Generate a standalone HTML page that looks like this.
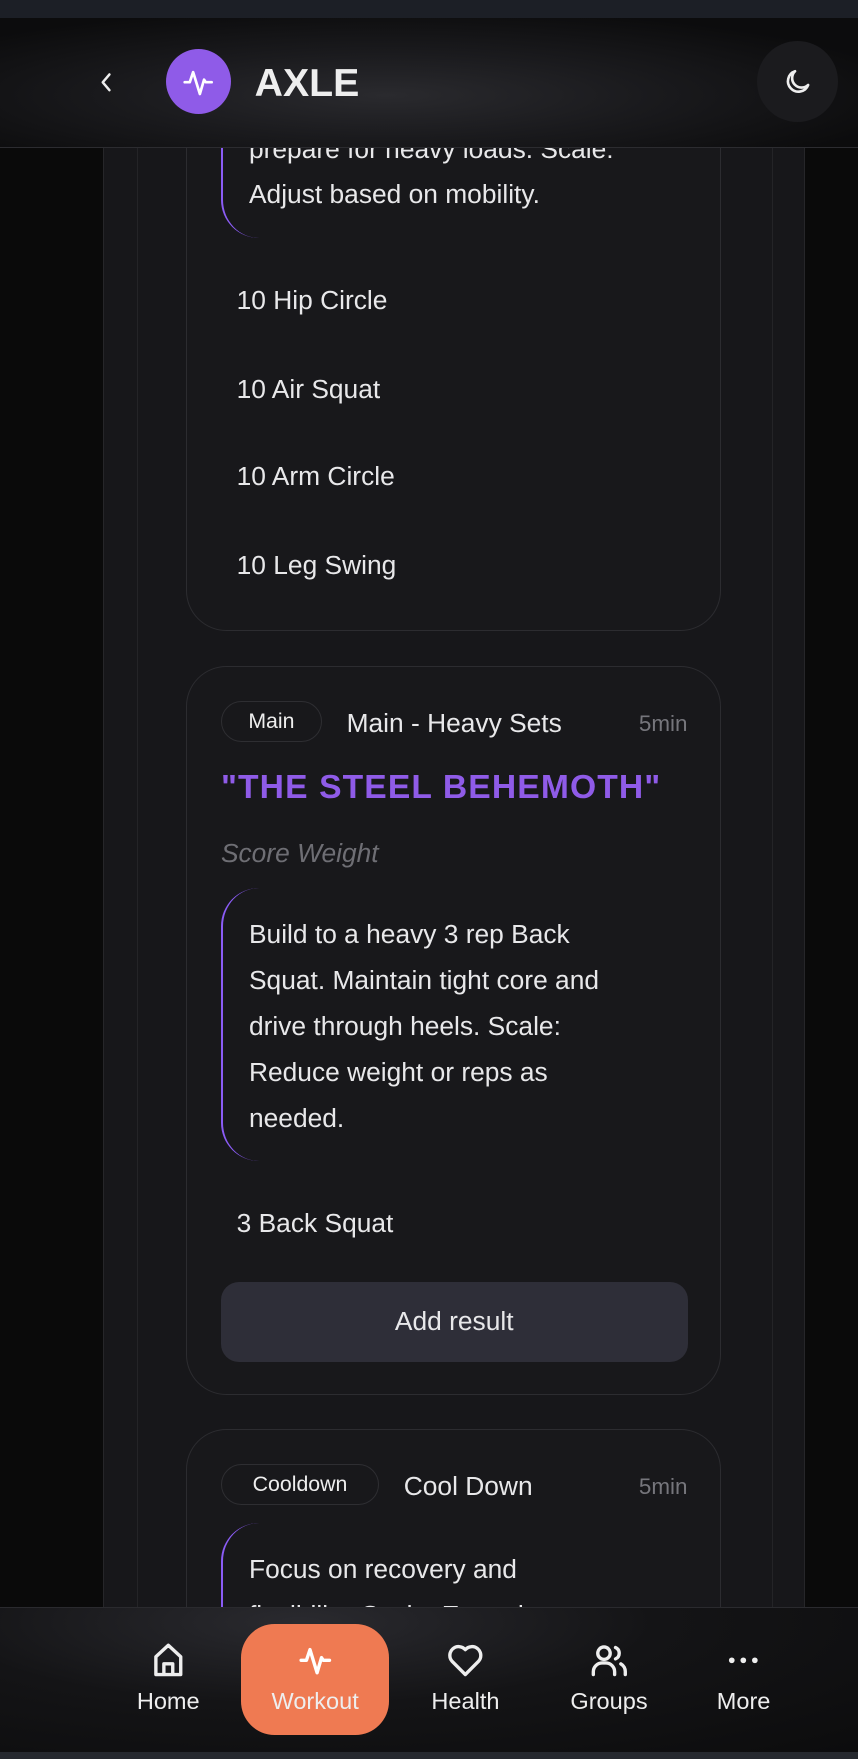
<!DOCTYPE html>
<html><head><meta charset="utf-8"><style>
html{zoom:1.12157;height:1568px;overflow:hidden;background:#0a0a0a}
*{box-sizing:border-box;margin:0;padding:0}
body{width:765px;height:1568px;overflow:hidden;background:#0a0a0a;font-family:"Liberation Sans",sans-serif;color:#e8e8ea;position:relative}
.abs{position:absolute}
.col{left:92px;width:626px;top:0;height:1568px;background:#17171a;border-left:1px solid #262629;border-right:1px solid #262629}
.vl{top:0;height:1568px;width:1px;background:#242427}
.card{left:166px;width:477px;border:1px solid #2c2c30;border-radius:36px;background:#18181b}
.t22{font-size:23.5px;line-height:1}
.quote{border-left:2px solid #8b5cf6;border-radius:34px 0 0 34px}
.tag{border:1px solid #2e2e32;border-radius:19px;height:37px;font-size:19px;display:flex;align-items:center;justify-content:center;color:#eee}
.min{font-size:20px;color:#76767c;width:60px;text-align:right}
.nav{top:1433px;left:0;width:765px;height:129px;background:radial-gradient(ellipse at 35% 10%,#2a2a2f 0%,#141416 45%,#0c0c0d 100%);border-top:1px solid #2a2a2e}
.ni{top:0;width:110px;text-align:center;font-size:21px;color:#eee}
.ni svg{display:block;margin:28px auto 0}
.ni span{display:block;margin-top:6px}
</style></head><body>
<div class="abs col"></div>
<div class="abs vl" style="left:122px"></div>
<div class="abs vl" style="left:688px"></div>

<!-- card 1 -->
<div class="abs card" style="top:60px;height:503px"></div>
<div class="abs quote" style="left:197px;top:40px;width:200px;height:172px"></div>
<div class="abs t22" style="left:222px;top:121px">prepare for heavy loads. Scale:</div>
<div class="abs t22" style="left:222px;top:161px">Adjust based on mobility.</div>
<div class="abs t22" style="left:211px;top:256px">10 Hip Circle</div>
<div class="abs t22" style="left:211px;top:335px">10 Air Squat</div>
<div class="abs t22" style="left:211px;top:413px">10 Arm Circle</div>
<div class="abs t22" style="left:211px;top:492px">10 Leg Swing</div>

<!-- card 2 -->
<div class="abs card" style="top:594px;height:650px"></div>
<div class="abs tag" style="left:197px;top:625px;width:90px">Main</div>
<div class="abs t22" style="left:309px;top:633px">Main - Heavy Sets</div>
<div class="abs min" style="left:553px;top:634px">5min</div>
<div class="abs" style="left:197px;top:686px;font-size:30px;font-weight:bold;color:#8f5be8;letter-spacing:1px">"THE STEEL BEHEMOTH"</div>
<div class="abs t22" style="left:197px;top:749px;font-style:italic;color:#6e6e74">Score Weight</div>
<div class="abs quote" style="left:197px;top:792px;width:200px;height:243px"></div>
<div class="abs t22" style="left:222px;line-height:41px;width:400px;top:813px">Build to a heavy 3 rep Back<br>Squat. Maintain tight core and<br>drive through heels. Scale:<br>Reduce weight or reps as<br>needed.</div>
<div class="abs t22" style="left:211px;top:1079px">3 Back Squat</div>
<div class="abs" style="left:197px;top:1143px;width:416px;height:71px;background:#2e2e38;border-radius:16px;font-size:23.5px;display:flex;align-items:center;justify-content:center">Add result</div>

<!-- card 3 -->
<div class="abs card" style="top:1274px;height:290px"></div>
<div class="abs tag" style="left:197px;top:1305px;width:141px">Cooldown</div>
<div class="abs t22" style="left:360px;top:1313px">Cool Down</div>
<div class="abs min" style="left:553px;top:1314px">5min</div>
<div class="abs quote" style="left:197px;top:1358px;width:200px;height:200px"></div>
<div class="abs t22" style="left:222px;top:1379px;line-height:41px">Focus on recovery and<br>flexibility. Scale: Extend</div>

<!-- header -->
<div class="abs" style="left:0;top:0;width:765px;height:16px;background:#1c1f26"></div>
<div class="abs" style="left:0;top:16px;width:765px;height:116px;background:radial-gradient(ellipse at 45% 60%,#2a2a2e 0%,#1a1a1d 40%,#0c0c0d 80%);border-bottom:1px solid #2c2c30"></div>
<svg class="abs" style="left:86px;top:62px" width="18" height="22" viewBox="0 0 18 22"><path d="M12 4 L6 11 L12 18" fill="none" stroke="#eee" stroke-width="2.2" stroke-linecap="round" stroke-linejoin="round"/></svg>
<div class="abs" style="left:148px;top:44px;width:58px;height:58px;border-radius:50%;background:#8f5be8"></div>
<svg class="abs" style="left:159px;top:55px" width="36" height="36" viewBox="0 0 24 24"><path d="M4 12h3l2-6 4 13 2.5-8.5 1 1.5H20" fill="none" stroke="#fff" stroke-width="1.6" stroke-linecap="round" stroke-linejoin="round"/></svg>
<div class="abs" style="left:227px;top:54px;font-size:35px;font-weight:bold;color:#eee">AXLE</div>
<div class="abs" style="left:675px;top:37px;width:72px;height:72px;border-radius:50%;background:#1b1b1e"></div>
<svg class="abs" style="left:697px;top:59px" width="28" height="28" viewBox="0 0 24 24"><path d="M20 14.5A8 8 0 1 1 10 4a6.5 6.5 0 0 0 10 10.5z" fill="none" stroke="#eee" stroke-width="2" stroke-linejoin="round"/></svg>

<!-- nav -->
<div class="abs nav"></div>
<div class="abs" style="left:0;top:1562px;width:765px;height:6px;background:#26292f"></div>
<div class="abs" style="left:215px;top:1448px;width:132px;height:99px;border-radius:30px;background:#ef7a52"></div>
<div class="abs ni" style="left:95px;top:1433px"><svg width="38" height="38" viewBox="0 0 24 24"><path d="M5 20V10l7-6.5 7 6.5v10zM9.5 20v-6h5v6" fill="none" stroke="#eee" stroke-width="1.9" stroke-linejoin="round"/></svg><span>Home</span></div>
<div class="abs ni" style="left:226px;top:1433px"><svg width="38" height="38" viewBox="0 0 24 24"><path d="M4 12h3l2-6 4 13 2.5-8.5 1 1.5H20" fill="none" stroke="#fff" stroke-width="1.9" stroke-linecap="round" stroke-linejoin="round"/></svg><span>Workout</span></div>
<div class="abs ni" style="left:360px;top:1433px"><svg width="38" height="38" viewBox="0 0 24 24"><path d="M12 20L4.5 12.5A4.5 4.5 0 0 1 12 6a4.5 4.5 0 0 1 7.5 6.5z" fill="none" stroke="#eee" stroke-width="1.9" stroke-linejoin="round"/></svg><span>Health</span></div>
<div class="abs ni" style="left:488px;top:1433px"><svg width="38" height="38" viewBox="0 0 24 24"><circle cx="9" cy="8" r="3.5" fill="none" stroke="#eee" stroke-width="1.9"/><path d="M3 20v-1.5a5 5 0 0 1 5-5h2a5 5 0 0 1 5 5V20M15.5 4.8a3.5 3.5 0 0 1 0 6.4M18.5 14a5 5 0 0 1 2.5 4.5V20" fill="none" stroke="#eee" stroke-width="1.9" stroke-linecap="round"/></svg><span>Groups</span></div>
<div class="abs ni" style="left:608px;top:1433px"><svg width="38" height="38" viewBox="0 0 24 24"><circle cx="5.5" cy="12" r="1.6" fill="#eee"/><circle cx="12" cy="12" r="1.6" fill="#eee"/><circle cx="18.5" cy="12" r="1.6" fill="#eee"/></svg><span>More</span></div>
</body></html>
